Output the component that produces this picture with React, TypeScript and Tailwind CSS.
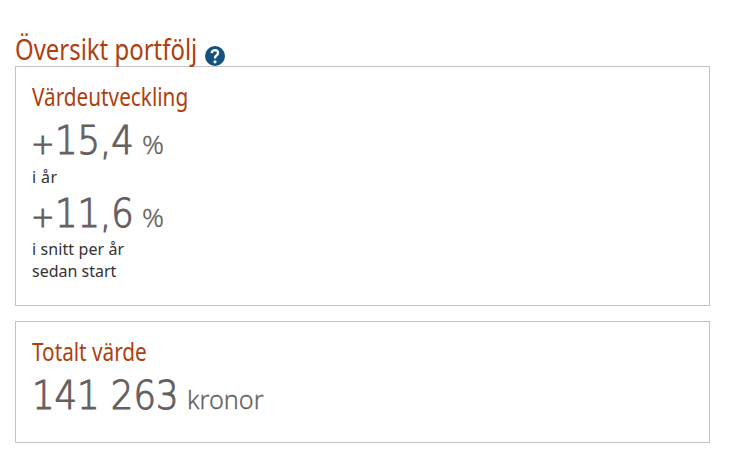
import React from "react";

function Value({ amount, unit, percent }: { amount: string; unit: string; percent?: boolean }) {
  return (
    <div className="flex h-[46px] items-baseline whitespace-pre pt-[8px] text-[#665f60]">
      <span className={`flex items-baseline font-['DejaVu_Sans',sans-serif] font-extralight ${percent ? "w-[110px]" : "w-[155px]"}`}>
        {percent && <span className="-ml-px w-[24px] pb-px text-[28px] leading-[38px] [-webkit-text-stroke:1px_#665f60]">+</span>}
        <span className="inline-block origin-left scale-x-[0.92] text-[38.5px] leading-[40px] [-webkit-text-stroke:1.1px_#665f60]">{amount}</span>
      </span>
      <span className={`inline-block origin-left font-['Noto_Sans',sans-serif] text-[26px] font-light leading-[40px] [-webkit-text-stroke:0.3px_#665f60] ${percent ? "scale-x-[1.04]" : "scale-x-[0.97]"}`}>{unit}</span>
    </div>
  );
}

function Heading({ children }: { children: React.ReactNode }) {
  return (
    <h2 className="h-[33px] w-fit origin-left scale-x-[0.83] whitespace-nowrap text-[25px] leading-[32px] text-[#ae4010]">
      {children}
    </h2>
  );
}

export default function App() {
  return (
    <main className="h-[465px] w-[734px] bg-white pl-[15px] pt-[32px] font-['Noto_Sans',sans-serif]">
      <header className="flex h-[34px] items-end">
        <h1 className="h-[35px] w-[190px] origin-left scale-x-[0.825] whitespace-nowrap text-[29px] leading-[36px] text-[#ae4010]">Översikt portfölj</h1>
        <svg className="h-5 w-5" viewBox="0 0 20 20">
          <circle cx="10" cy="10" r="10" fill="#135280" />
          <path d="M6.7 7.1Q7.1 4.1 10.1 4.1Q13.1 4.2 13 7Q13 8.5 11.3 9.5Q10 10.3 10 12.5" fill="none" stroke="white" strokeWidth="2.4" />
          <circle cx="10" cy="15.8" r="1.6" fill="white" />
        </svg>
      </header>
      <section className="h-[240px] w-[695px] border border-[#c6c2bf] px-4 pt-[13px]">
        <Heading>Värdeutveckling</Heading>
        <Value amount="15,4" unit="%" percent />
        <p className="h-[27px] w-fit pt-[7px] text-base leading-[22px] tracking-[0.4px] text-[#333]">i år</p>
        <Value amount="11,6" unit="%" percent />
        <p className="w-fit pt-[6px] text-base leading-[22px] tracking-[0.1px] text-[#333]">i snitt per år</p>
        <p className="w-fit text-base leading-[22px] text-[#333]">sedan start</p>
      </section>
      <section className="mt-[15px] h-[122px] w-[695px] border border-[#c6c2bf] px-4 pt-[13px]">
        <Heading>Totalt värde</Heading>
        <Value amount="141 263" unit="kronor" />
      </section>
    </main>
  );
}
